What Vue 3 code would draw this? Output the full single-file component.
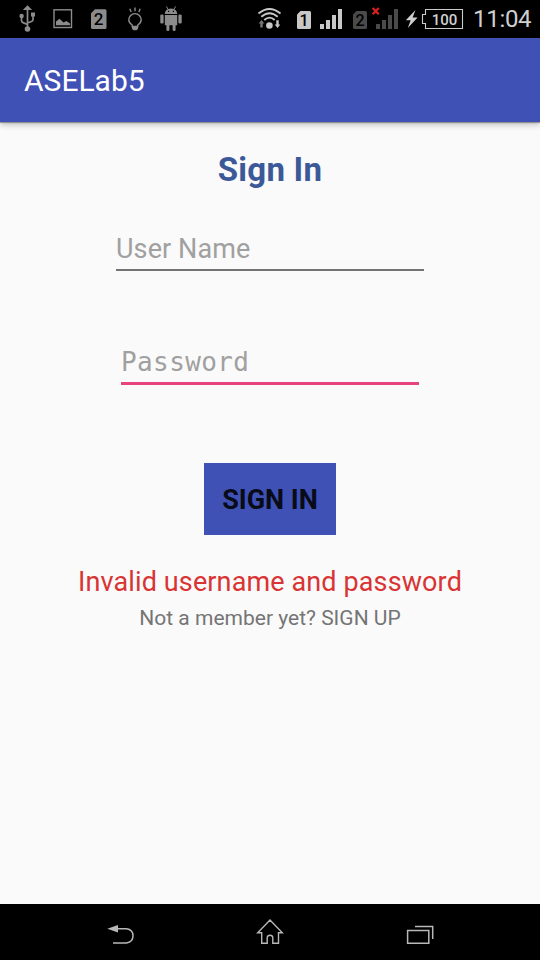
<script setup>
import { ref } from 'vue'

const username = ref('')
const password = ref('')
const bars = [
  { x: 320, y: 24 },
  { x: 326, y: 20 },
  { x: 332, y: 15 },
  { x: 338, y: 9 }
]
</script>

<template>
  <div class="screen">
    <header class="status">
      <div class="group notifications">
        <svg width="36" height="38" viewBox="9 0 36 38">
          <g fill="none" stroke="#8c8c8c" stroke-width="1.7">
            <path d="M27.5 9V29M21.5 16V20.5Q21.5 22 23 22.6L27.5 24.5M33 15V19.5Q33 21 31.5 21.5L27.5 23" />
          </g>
          <g fill="#8c8c8c">
            <path d="M22.8 10L27.5 5.2L32.2 10Z" />
            <circle cx="27.5" cy="29" r="2.8" />
            <circle cx="21.6" cy="16" r="2.2" />
            <rect x="31" y="12.5" width="4" height="4" />
          </g>
        </svg>
        <svg width="36" height="38" viewBox="45 0 36 38">
          <rect x="54" y="9.8" width="17.5" height="17.7" fill="none" stroke="#8c8c8c" stroke-width="1.4" />
          <path d="M56 25.3V21.5L59.5 18.8L63.5 22.5L66.5 21L70 23.500V25.3Z" fill="#8c8c8c" />
        </svg>
        <svg width="36" height="38" viewBox="81 0 36 38">
          <path d="M95 9.3H105Q106.5 9.3 106.5 10.8V27.5Q106.5 29 105 29H92.5Q91 29 91 27.5V13.3Z" fill="#8c8c8c" />
          <text x="98.7" y="25.3" class="sim">2</text>
        </svg>
        <svg width="36" height="38" viewBox="117 0 36 38">
          <g fill="none" stroke="#8c8c8c" stroke-width="1.4">
            <path d="M132.2 26.5V25Q128.8 23 128.8 19.8A6.2 6.2 0 0 1 141.2 19.8Q141.2 23 137.8 25V26.5Z" />
            <path d="M135 7.5V11.2M129.8 8.7L131.2 12M140.2 8.7L138.8 12" />
          </g>
          <path d="M132 26.3H138V28.8L136.6 30.3H133.4L132 28.8Z" fill="#8c8c8c" />
        </svg>
        <svg width="36" height="38" viewBox="153 0 36 38">
          <g fill="#8c8c8c">
            <path d="M164.8 14Q165 8.6 171 8.4Q177 8.6 177.2 14Z" />
            <path d="M164.8 15H177.2V25.2H175.6V30Q175.6 31 174.1 31Q172.6 31 172.6 30V25.2H169.4V30Q169.4 31 167.9 31Q166.4 31 166.4 30V25.2H164.8Z" />
            <rect x="160.3" y="14.5" width="3.3" height="9" rx="1.2" />
            <rect x="178.4" y="14.5" width="3.3" height="9" rx="1.2" />
          </g>
          <path d="M166.5 6.5L168.2 9.5M175.5 6.5L173.8 9.5" stroke="#8c8c8c" />
          <path d="M168 11.3H169.2M172.8 11.3H174" stroke="#000" stroke-width="1.2" />
        </svg>
      </div>
      <div class="group">
        <svg width="40" height="38" viewBox="250 0 40 38">
          <g fill="none" stroke="#c8c8c8" stroke-width="1.8">
            <path d="M258.5 13.500Q269.5 4.500 280.500 13.500" />
            <path d="M261.300 16.800Q269.500 9.700 277.700 16.800" />
            <path d="M264.300 20Q269.500 15.300 274.700 20" />
          </g>
          <circle cx="269.400" cy="25.500" r="3.300" fill="#c8c8c8" />
          <path d="M261.500 20L264.300 23.500H262.700V27.500H260.300V23.500H258.700Z" fill="#777" />
          <path d="M277.500 28L280.300 24.500H278.700V20.300H276.300V24.500H274.700Z" fill="#c8c8c8" />
        </svg>
        <svg width="26" height="38" viewBox="290 0 26 38">
          <path d="M300.500 11H309.500Q311 11 311 12.500V27.500Q311 29 309.500 29H298.500Q297 29 297 27.500V14.500Z" fill="#c8c8c8" />
          <text x="304" y="26" class="sim small">1</text>
        </svg>
        <svg width="30" height="38" viewBox="316 0 30 38">
          <rect v-for="b in bars" :key="b.x" :x="b.x" :y="b.y" width="4" :height="29 - b.y" fill="#c8c8c8" />
        </svg>
        <svg width="24" height="38" viewBox="346 0 24 38">
          <path d="M356.500 11H365.500Q367 11 367 12.500V27.500Q367 29 365.500 29H354.500Q353 29 353 27.500V14.500Z" fill="#4a4a4a" />
          <text x="360" y="26" class="sim small">2</text>
        </svg>
        <svg width="30" height="38" viewBox="314 0 30 38">
          <rect v-for="b in bars" :key="b.x" :x="b.x" :y="b.y" width="4" :height="29 - b.y" fill="#4a4a4a" />
          <path d="M316.700 8L322.700 14.200M322.700 8L316.700 14.200" stroke="#d82020" stroke-width="2.300" />
        </svg>
        <svg width="18" height="38" viewBox="400 0 18 38">
          <path d="M415.500 10L405.800 20.300H410.700L407.800 28L417.600 17.500H412.600Z" fill="#d0d0d0" />
        </svg>
        <svg width="50" height="38" viewBox="418 0 50 38">
          <path d="M425.500 9.500H462.500V28.500H425.500V23.500H422.500V14.500H425.500Z" fill="none" stroke="#c8ccc8" stroke-width="1.100" />
          <text x="444.500" y="25" class="percent">100</text>
        </svg>
        <span class="clock">11:04</span>
      </div>
    </header>

    <div class="appbar"><span>ASELab5</span></div>

    <main class="content">
      <h1>Sign In</h1>
      <input v-model="username" class="field user" type="text" placeholder="User Name" />
      <input v-model="password" class="field pass" type="password" placeholder="Password" />
      <button class="submit" type="button">SIGN IN</button>
      <p class="error">Invalid username and password</p>
      <p class="signup">Not a member yet? SIGN UP</p>
    </main>

    <nav class="navbar">
      <svg width="30" height="56" viewBox="105 904 30 56">
        <path d="M117 928.700H126.500Q133 929.500 133 935.800Q133 942 126.500 943H113" fill="none" stroke="#b8b8b8" stroke-width="1.500" />
        <path d="M107.300 928.700L118 925V932.500Z" fill="#b8b8b8" />
      </svg>
      <svg width="30" height="56" viewBox="255 904 30 56">
        <path d="M270 920L282.300 932.700H278.500V943.300H272.800V937.500Q272.500 935.300 270 935.300Q267.500 935.300 267.200 937.500V943.300H261.700V932.700H257.700Z" fill="none" stroke="#b8b8b8" stroke-width="1.400" />
      </svg>
      <svg width="30" height="56" viewBox="405 904 30 56">
        <path d="M407.600 930.500H428.800V943.200H407.600ZM415 926.500H432.700V939" fill="none" stroke="#b8b8b8" stroke-width="1.500" />
      </svg>
    </nav>
  </div>
</template>

<style>
body {
  margin: 0;
}
</style>

<style scoped>
.screen {
  width: 540px;
  height: 960px;
  display: flex;
  flex-direction: column;
  background: #fafafa;
  font-family: Roboto, sans-serif;
  overflow: hidden;
}
svg {
  display: block;
  flex: none;
}
.status {
  height: 38px;
  flex: none;
  display: flex;
  justify-content: space-between;
  background: #000;
}
.group {
  display: flex;
}
.notifications {
  padding-left: 9px;
}
.sim {
  font: 500 17px Roboto, sans-serif;
  text-anchor: middle;
  fill: #000;
}
.small {
  font-size: 16px;
}
.percent {
  font: 500 15px Roboto, sans-serif;
  text-anchor: middle;
  fill: #d0d0d0;
}
.clock {
  width: 72px;
  box-sizing: border-box;
  padding-left: 5px;
  font-size: 24px;
  letter-spacing: -0.3px;
  line-height: 39px;
  color: #cfcfcf;
}
.appbar {
  height: 84px;
  flex: none;
  display: flex;
  align-items: center;
  padding: 0 24px;
  background: #3f51b5;
  color: #fff;
  font-size: 30px;
  box-shadow: 0 1px 1px rgba(0, 0, 0, 0.3), 0 3px 6px rgba(0, 0, 0, 0.22);
}
.content {
  flex: 1;
  display: flex;
  flex-direction: column;
  align-items: center;
}
h1 {
  margin: 28px 0 0;
  font-size: 33px;
  line-height: 40px;
  font-weight: 700;
  letter-spacing: 0.25px;
  color: #3b5998;
}
.field {
  box-sizing: border-box;
  border: 0;
  padding: 0;
  background: transparent;
  outline: none;
  height: 44px;
  font-size: 27px;
}
.field::placeholder {
  color: #a0a0a0;
  opacity: 1;
}
.user {
  width: 308px;
  margin-top: 37px;
  padding-top: 2px;
  font-family: Roboto, sans-serif;
  letter-spacing: 0.1px;
  border-bottom: 2px solid #737373;
}
.pass {
  width: 298px;
  margin-top: 70px;
  font-family: "DejaVu Sans Mono", monospace;
  font-size: 26px;
  letter-spacing: 0.4px;
  border-bottom: 3px solid #e9437f;
}
.submit {
  width: 132px;
  height: 72px;
  margin-top: 78px;
  padding: 2px 0 0;
  border: 0;
  background: #3f51b5;
  color: #080b18;
  font: 700 27px Roboto, sans-serif;
}
.error {
  margin: 29px 0 0;
  font-size: 27px;
  line-height: 36px;
  letter-spacing: 0.12px;
  color: #d93434;
}
.signup {
  margin: 5px 0 0;
  font-size: 21px;
  line-height: 26px;
  color: #757575;
}
.navbar {
  height: 56px;
  flex: none;
  display: flex;
  justify-content: space-between;
  padding: 0 105px;
  background: #000;
}
</style>
